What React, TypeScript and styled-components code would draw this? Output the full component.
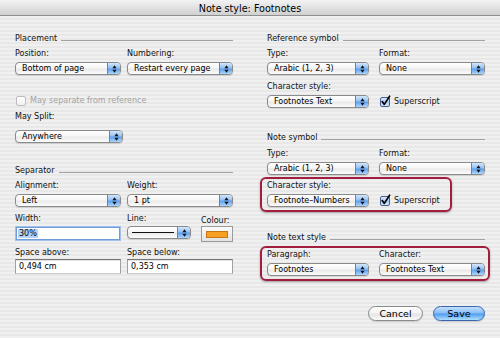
import React from 'react';
import styled, { createGlobalStyle, css } from 'styled-components';

const GlobalStyle = createGlobalStyle`
  html, body {
    margin: 0;
    padding: 0;
  }
  body {
    width: 500px;
    height: 338px;
    overflow: hidden;
    background: #ececec;
  }
`;

const Dialog = styled.div`
  width: 500px;
  height: 338px;
  display: flex;
  flex-direction: column;
  overflow: hidden;
  font-family: "DejaVu Sans", Verdana, sans-serif;
  font-size: 8px;
  color: #111;
  background: repeating-linear-gradient(
    to bottom,
    #f0f0f0 0,
    #f0f0f0 2px,
    #e8e8e8 2px,
    #e8e8e8 4px
  );
`;

const TitleBar = styled.div`
  height: 16px;
  flex-shrink: 0;
  box-sizing: border-box;
  padding-top: 1px;
  border-bottom: 1px solid #8e8e8e;
  background: linear-gradient(to bottom, #f3f3f3, #d0d0d0);
  display: flex;
  align-items: center;
  justify-content: center;
  font-size: 9.6px;
  color: #000;
`;

const Body = styled.div`
  display: grid;
  grid-template-columns: 218px 218px;
  column-gap: 34px;
  padding: 17px 15px 0;
  align-items: start;
`;

const Column = styled.div`
  display: flex;
  flex-direction: column;
`;

const SectionHeader = styled.div<{ $mt?: number }>`
  display: flex;
  height: 11px;
  line-height: 11px;
  margin-top: ${p => p.$mt ?? 0}px;
  color: #111;
  white-space: nowrap;

  &::after {
    content: '';
    flex: 1;
    height: 1px;
    margin: 0 0 3px 4px;
    align-self: flex-end;
    background: #a2a2a2;
  }
`;

const Row = styled.div<{ $mt?: number; $cols?: string; $gap?: number }>`
  display: grid;
  grid-template-columns: ${p => p.$cols ?? '106px 106px'};
  column-gap: ${p => p.$gap ?? 6}px;
  align-items: start;
  margin-top: ${p => p.$mt ?? 0}px;
`;

const Field = styled.div<{ $gap?: number; $mt?: number }>`
  display: flex;
  flex-direction: column;
  gap: ${p => p.$gap ?? 3}px;
  margin-top: ${p => p.$mt ?? 0}px;
`;

const Label = styled.div`
  height: 11px;
  line-height: 11px;
  white-space: nowrap;
  color: #111;
`;

const PopupBox = styled.div<{ $width?: number }>`
  height: 13px;
  box-sizing: border-box;
  ${p => p.$width && css`width: ${p.$width}px;`}
  display: flex;
  border: 1px solid #8a8a8a;
  border-radius: 4px;
  overflow: hidden;
  background: linear-gradient(
    to bottom,
    #ffffff 0%,
    #f6f6f6 45%,
    #e9e9e9 55%,
    #fcfcfc 100%
  );
  box-shadow: 0 1px 1px rgba(0, 0, 0, 0.12);
`;

const PopupText = styled.span`
  flex: 1;
  min-width: 0;
  padding-left: 6px;
  line-height: 11px;
  white-space: nowrap;
  overflow: hidden;
  color: #000;
  display: flex;
  align-items: center;
`;

const PopupArrows = styled.span`
  width: 12px;
  flex-shrink: 0;
  border-left: 1px solid #5d84bf;
  background: linear-gradient(
    to bottom,
    #d4e7fd 0%,
    #93c1f4 45%,
    #5f9fec 55%,
    #acd6ff 100%
  );
  display: flex;
  align-items: center;
  justify-content: center;
`;

const LineSample = styled.span`
  width: 42px;
  height: 1px;
  margin-left: -2px;
  background: #111;
`;

const TextField = styled.div<{ $focused?: boolean }>`
  height: 15px;
  box-sizing: border-box;
  background: #fff;
  border: 1px solid #a0a0a0;
  border-top-color: #777;
  border-bottom-color: #c9c9c9;
  box-shadow: inset 0 1px 0 #e2e2e2;
  padding: 1px 0 0 3px;
  line-height: 12px;
  color: #000;
  white-space: nowrap;

  ${p =>
    p.$focused &&
    css`
      border: 1px solid #9fc1ec;
      box-shadow: inset 0 0 0 1px #6f9bd8;
      padding: 0 0 0 3px;
      line-height: 13px;
    `}
`;

const Selection = styled.span`
  background: #b5d3f6;
  padding: 0 1px;
  margin-left: -1px;
`;

const ColourWell = styled.div`
  width: 32px;
  height: 16px;
  box-sizing: border-box;
  border: 1px solid #9a9a9a;
  background: linear-gradient(to bottom, #fbfbfb, #e2e2e2);
  display: flex;
  align-items: center;
  justify-content: center;
`;

const Swatch = styled.div<{ $color: string }>`
  width: 22px;
  height: 7px;
  box-sizing: border-box;
  background: ${p => p.$color};
  border: 1px solid #c77812;
`;

const CheckRow = styled.div<{ $disabled?: boolean; $mt?: number; $ml?: number }>`
  display: flex;
  align-items: center;
  gap: 3px;
  height: 11px;
  line-height: 11px;
  margin-top: ${p => p.$mt ?? 0}px;
  margin-left: ${p => p.$ml ?? 0}px;
  color: ${p => (p.$disabled ? '#a3a3a3' : '#111')};
  white-space: nowrap;
`;

const CheckCell = styled.div`
  align-self: end;
  height: 13px;
  display: flex;
  align-items: center;
`;

const Highlight = styled.div<{ $width?: number; $mt?: number; $mr?: number }>`
  box-sizing: border-box;
  ${p => p.$width && css`width: ${p.$width}px; align-self: flex-start;`}
  margin: ${p => p.$mt ?? 0}px ${p => p.$mr ?? 0}px 0 -7px;
  padding: 1px 3px 3px 5px;
  border: 2px solid #a21e3e;
  border-radius: 6px;
  box-shadow: 0 1px 2px rgba(0, 0, 0, 0.35);
`;

const ButtonRow = styled.div`
  display: flex;
  justify-content: flex-end;
  gap: 10px;
  margin-top: 25px;
`;

const Button = styled.div<{ $primary?: boolean; $width: number }>`
  width: ${p => p.$width}px;
  height: 15px;
  box-sizing: border-box;
  border-radius: 8px;
  border: 1px solid #8a8a8a;
  background: linear-gradient(
    to bottom,
    #ffffff 0%,
    #f4f4f4 48%,
    #e3e3e3 52%,
    #fbfbfb 100%
  );
  box-shadow: 0 1px 1px rgba(0, 0, 0, 0.15);
  font-size: 9.5px;
  line-height: 13px;
  text-align: center;
  color: #000;

  ${p =>
    p.$primary &&
    css`
      border-color: #3a66ad;
      background: linear-gradient(
        to bottom,
        #c3e0fe 0%,
        #86bdf5 48%,
        #4d9bf0 52%,
        #aee0ff 100%
      );
    `}
`;

const Arrows = () => (
  <svg width="5" height="8" viewBox="0 0 5 8">
    <path d="M2.5 0.3 L4.6 3.2 H0.4 Z M2.5 7.7 L4.6 4.8 H0.4 Z" fill="#141414" />
  </svg>
);

const Popup = ({ value, width }: { value: React.ReactNode; width?: number }) => (
  <PopupBox $width={width}>
    <PopupText>{value}</PopupText>
    <PopupArrows>
      <Arrows />
    </PopupArrows>
  </PopupBox>
);

const Checkbox = ({ checked, disabled }: { checked?: boolean; disabled?: boolean }) => (
  <svg width="11" height="11" viewBox="0 0 11 11" style={{ overflow: 'visible' }}>
    <defs>
      <linearGradient id="cbOn" x1="0" y1="0" x2="0" y2="1">
        <stop offset="0" stopColor="#e4efff" />
        <stop offset="0.5" stopColor="#a9c9f3" />
        <stop offset="1" stopColor="#d8ecff" />
      </linearGradient>
      <linearGradient id="cbOff" x1="0" y1="0" x2="0" y2="1">
        <stop offset="0" stopColor="#ffffff" />
        <stop offset="1" stopColor="#f0f0f0" />
      </linearGradient>
    </defs>
    <rect
      x="0.5"
      y="1.5"
      width="9"
      height="9"
      rx="1.5"
      fill={checked ? 'url(#cbOn)' : 'url(#cbOff)'}
      stroke={disabled ? '#bdbdbd' : checked ? '#4a5f93' : '#8a8a8a'}
    />
    {checked && (
      <path
        d="M2.2 5.6 L4.3 8.4 L9.6 0.2"
        fill="none"
        stroke="#000"
        strokeWidth="1.7"
        strokeLinecap="round"
        strokeLinejoin="round"
      />
    )}
  </svg>
);

const App = () => (
  <>
    <GlobalStyle />
    <Dialog>
      <TitleBar>Note style: Footnotes</TitleBar>
      <Body>
        <Column>
          <SectionHeader>Placement</SectionHeader>
          <Row $mt={4}>
            <Field>
              <Label>Position:</Label>
              <Popup value="Bottom of page" />
            </Field>
            <Field>
              <Label>Numbering:</Label>
              <Popup value="Restart every page" />
            </Field>
          </Row>

          <CheckRow $disabled $mt={20} $ml={1}>
            <Checkbox disabled />
            May separate from reference
          </CheckRow>

          <Field $gap={8} $mt={5}>
            <Label>May Split:</Label>
            <Popup value="Anywhere" width={108} />
          </Field>

          <SectionHeader $mt={22}>Separator</SectionHeader>
          <Row $mt={4}>
            <Field>
              <Label>Alignment:</Label>
              <Popup value="Left" />
            </Field>
            <Field>
              <Label>Weight:</Label>
              <Popup value="1 pt" />
            </Field>
          </Row>

          <Row $mt={6}>
            <Field $gap={2}>
              <Label>Width:</Label>
              <TextField $focused>
                <Selection>30%</Selection>
              </TextField>
            </Field>
            <Row $cols="64px 32px" $gap={10}>
              <Field $gap={2}>
                <Label>Line:</Label>
                <Popup value={<LineSample />} />
              </Field>
              <Field $gap={0} $mt={2}>
                <Label>Colour:</Label>
                <ColourWell>
                  <Swatch $color="#f7a021" />
                </ColourWell>
              </Field>
            </Row>
          </Row>

          <Row $mt={5}>
            <Field $gap={1}>
              <Label>Space above:</Label>
              <TextField>0,494 cm</TextField>
            </Field>
            <Field $gap={1}>
              <Label>Space below:</Label>
              <TextField>0,353 cm</TextField>
            </Field>
          </Row>
        </Column>

        <Column>
          <SectionHeader>Reference symbol</SectionHeader>
          <Row $mt={4} $cols="102px 106px" $gap={10}>
            <Field>
              <Label>Type:</Label>
              <Popup value="Arabic (1, 2, 3)" />
            </Field>
            <Field>
              <Label>Format:</Label>
              <Popup value="None" />
            </Field>
          </Row>
          <Row $mt={6} $cols="102px 106px" $gap={10}>
            <Field>
              <Label>Character style:</Label>
              <Popup value="Footnotes Text" />
            </Field>
            <CheckCell>
              <CheckRow $ml={1}>
                <Checkbox checked />
                Superscript
              </CheckRow>
            </CheckCell>
          </Row>

          <SectionHeader $mt={24}>Note symbol</SectionHeader>
          <Row $mt={5} $cols="102px 106px" $gap={10}>
            <Field>
              <Label>Type:</Label>
              <Popup value="Arabic (1, 2, 3)" />
            </Field>
            <Field>
              <Label>Format:</Label>
              <Popup value="None" />
            </Field>
          </Row>
          <Highlight $width={192} $mt={2}>
            <Row $cols="102px auto" $gap={10}>
              <Field>
                <Label>Character style:</Label>
                <Popup value="Footnote–Numbers" />
              </Field>
              <CheckCell>
                <CheckRow $ml={1}>
                  <Checkbox checked />
                  Superscript
                </CheckRow>
              </CheckCell>
            </Row>
          </Highlight>

          <SectionHeader $mt={20}>Note text style</SectionHeader>
          <Highlight $mt={3} $mr={-5}>
            <Row $cols="102px 106px" $gap={10}>
              <Field>
                <Label>Paragraph:</Label>
                <Popup value="Footnotes" />
              </Field>
              <Field>
                <Label>Character:</Label>
                <Popup value="Footnotes Text" />
              </Field>
            </Row>
          </Highlight>

          <ButtonRow>
            <Button $width={55}>Cancel</Button>
            <Button $width={52} $primary>
              Save
            </Button>
          </ButtonRow>
        </Column>
      </Body>
    </Dialog>
  </>
);

export default App;
